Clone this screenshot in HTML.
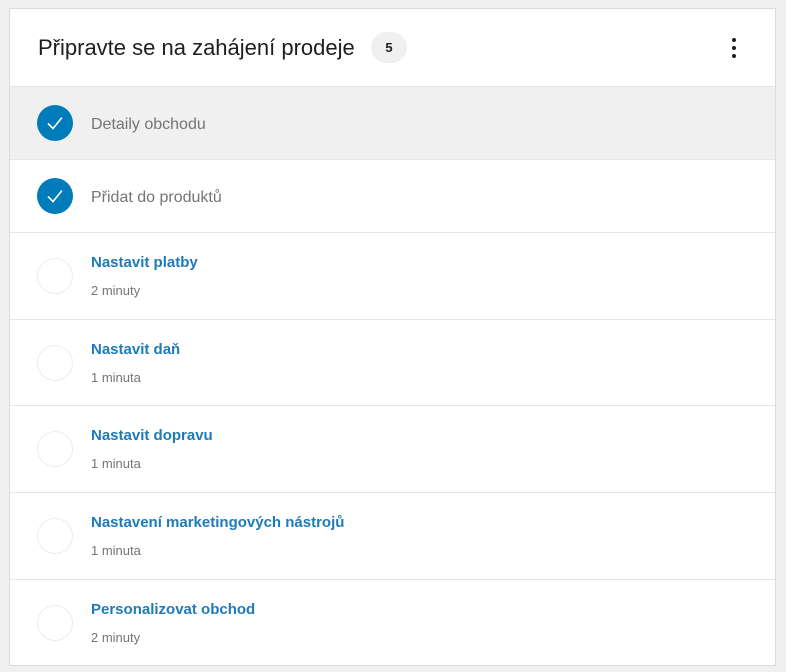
<!DOCTYPE html><html><head><style>
body{margin:0;background:#f0f0f0;font-family:"Liberation Sans",sans-serif;width:786px;height:672px;position:relative;overflow:hidden}
.card{position:absolute;left:9px;top:8px;width:765px;height:656px;background:#fff;border:1px solid #dcdcde;box-sizing:content-box}
.hd{height:77px;border-bottom:1px solid #e6e6e6;position:relative}
.hd h2{position:absolute;left:28px;top:26px;margin:0;font-weight:400;font-size:22px;color:#1e1e1e}
.badge{position:absolute;left:361px;top:23px;width:36px;height:31px;border-radius:16px;background:#f0f0f0;font-size:13px;font-weight:700;text-align:center;line-height:31px;color:#1e1e1e}
.dots{position:absolute;left:722px;top:29px;width:4px}
.dots i{display:block;width:4px;height:4px;border-radius:2px;background:#1e1e1e;margin-bottom:4px}
.row{position:relative;border-bottom:1px solid #e6e6e6}
.c{position:absolute;left:27px;width:36px;height:36px;border-radius:50%;box-sizing:border-box}
.done{background:#007cba}
.todo{border:1px solid #ececec}
.t{position:absolute;left:81px;font-size:16px}
.g{color:#757575}
.b{color:#1e7bb8;font-weight:700;font-size:15px}
.s{position:absolute;left:81px;font-size:13px;color:#757575}
</style></head><body><div class="card">
<div class="hd"><h2>Připravte se na zahájení prodeje</h2><div class="badge">5</div><div class="dots"><i></i><i></i><i></i></div></div>
<div class="row" style="height:72px;background:#f0f0f0"><div class="c done" style="top:18px"><svg width="36" height="36"><path d="M11 18.5l5 5 9-11" stroke="#fff" stroke-width="1.6" fill="none"/></svg></div><div class="t g" style="top:29px">Detaily obchodu</div></div>
<div class="row" style="height:72px"><div class="c done" style="top:18px"><svg width="36" height="36"><path d="M11 18.5l5 5 9-11" stroke="#fff" stroke-width="1.6" fill="none"/></svg></div><div class="t g" style="top:29px">Přidat do produktů</div></div>
<div class="row" style="height:86px"><div class="c todo" style="top:25px"></div><div class="t b" style="top:21px">Nastavit platby</div><div class="s" style="top:50px">2 minuty</div></div>
<div class="row" style="height:85px"><div class="c todo" style="top:25px"></div><div class="t b" style="top:21px">Nastavit daň</div><div class="s" style="top:50px">1 minuta</div></div>
<div class="row" style="height:86px"><div class="c todo" style="top:25px"></div><div class="t b" style="top:21px">Nastavit dopravu</div><div class="s" style="top:50px">1 minuta</div></div>
<div class="row" style="height:86px"><div class="c todo" style="top:25px"></div><div class="t b" style="top:21px">Nastavení marketingových nástrojů</div><div class="s" style="top:50px">1 minuta</div></div>
<div class="row" style="height:85px;border-bottom:none"><div class="c todo" style="top:25px"></div><div class="t b" style="top:21px">Personalizovat obchod</div><div class="s" style="top:50px">2 minuty</div></div>
</div></body></html>
